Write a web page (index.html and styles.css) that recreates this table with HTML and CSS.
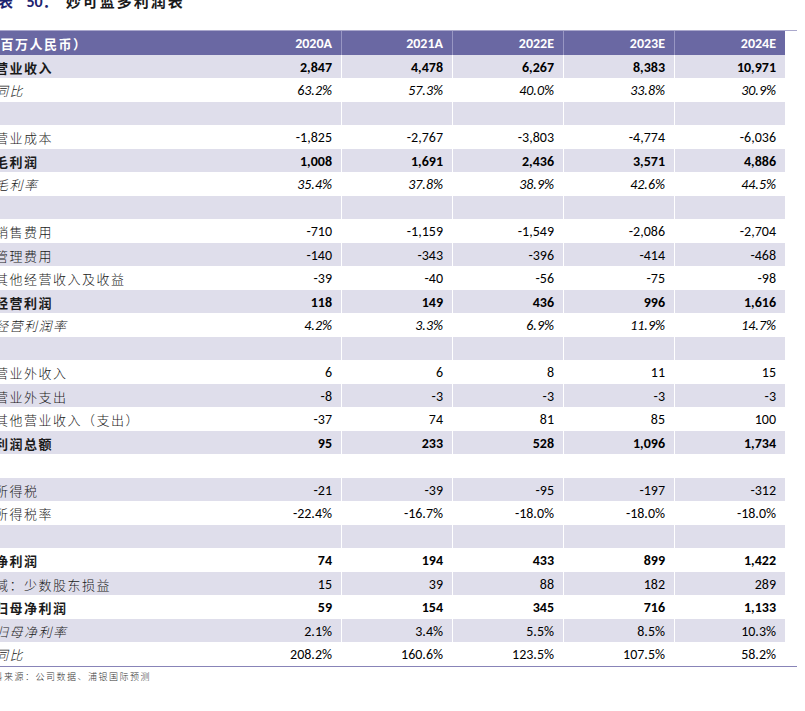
FILE: index.html
```html
<!DOCTYPE html>
<html lang="zh-CN">
<head>
<meta charset="utf-8">
<title>妙可蓝多利润表</title>
<link rel="stylesheet" href="styles.css">
</head>
<body>
<div class="title"><span class="title-no">表 <span class="lat">50</span>：</span>妙可蓝多利润表</div>
<div class="sheet">
  <div class="row head">
    <div class="lbl"><span class="lat">(</span>百万人民币）</div>
    <div class="v">2020A</div><div class="v">2021A</div><div class="v">2022E</div><div class="v">2023E</div><div class="v">2024E</div>
  </div>
  <div class="row shade bold"><div class="lbl">营业收入</div><div class="v">2,847</div><div class="v">4,478</div><div class="v">6,267</div><div class="v">8,383</div><div class="v">10,971</div></div>
  <div class="row ital"><div class="lbl">同比</div><div class="v">63.2%</div><div class="v">57.3%</div><div class="v">40.0%</div><div class="v">33.8%</div><div class="v">30.9%</div></div>
  <div class="row shade"><div class="lbl"></div><div class="v"></div><div class="v"></div><div class="v"></div><div class="v"></div><div class="v"></div></div>
  <div class="row"><div class="lbl">营业成本</div><div class="v">-1,825</div><div class="v">-2,767</div><div class="v">-3,803</div><div class="v">-4,774</div><div class="v">-6,036</div></div>
  <div class="row shade bold"><div class="lbl">毛利润</div><div class="v">1,008</div><div class="v">1,691</div><div class="v">2,436</div><div class="v">3,571</div><div class="v">4,886</div></div>
  <div class="row ital"><div class="lbl">毛利率</div><div class="v">35.4%</div><div class="v">37.8%</div><div class="v">38.9%</div><div class="v">42.6%</div><div class="v">44.5%</div></div>
  <div class="row shade"><div class="lbl"></div><div class="v"></div><div class="v"></div><div class="v"></div><div class="v"></div><div class="v"></div></div>
  <div class="row"><div class="lbl">销售费用</div><div class="v">-710</div><div class="v">-1,159</div><div class="v">-1,549</div><div class="v">-2,086</div><div class="v">-2,704</div></div>
  <div class="row shade"><div class="lbl">管理费用</div><div class="v">-140</div><div class="v">-343</div><div class="v">-396</div><div class="v">-414</div><div class="v">-468</div></div>
  <div class="row"><div class="lbl">其他经营收入及收益</div><div class="v">-39</div><div class="v">-40</div><div class="v">-56</div><div class="v">-75</div><div class="v">-98</div></div>
  <div class="row shade bold"><div class="lbl">经营利润</div><div class="v">118</div><div class="v">149</div><div class="v">436</div><div class="v">996</div><div class="v">1,616</div></div>
  <div class="row ital"><div class="lbl">经营利润率</div><div class="v">4.2%</div><div class="v">3.3%</div><div class="v">6.9%</div><div class="v">11.9%</div><div class="v">14.7%</div></div>
  <div class="row shade"><div class="lbl"></div><div class="v"></div><div class="v"></div><div class="v"></div><div class="v"></div><div class="v"></div></div>
  <div class="row"><div class="lbl">营业外收入</div><div class="v">6</div><div class="v">6</div><div class="v">8</div><div class="v">11</div><div class="v">15</div></div>
  <div class="row shade"><div class="lbl">营业外支出</div><div class="v">-8</div><div class="v">-3</div><div class="v">-3</div><div class="v">-3</div><div class="v">-3</div></div>
  <div class="row"><div class="lbl">其他营业收入（支出）</div><div class="v">-37</div><div class="v">74</div><div class="v">81</div><div class="v">85</div><div class="v">100</div></div>
  <div class="row shade bold"><div class="lbl">利润总额</div><div class="v">95</div><div class="v">233</div><div class="v">528</div><div class="v">1,096</div><div class="v">1,734</div></div>
  <div class="row"><div class="lbl"></div><div class="v"></div><div class="v"></div><div class="v"></div><div class="v"></div><div class="v"></div></div>
  <div class="row shade"><div class="lbl">所得税</div><div class="v">-21</div><div class="v">-39</div><div class="v">-95</div><div class="v">-197</div><div class="v">-312</div></div>
  <div class="row"><div class="lbl">所得税率</div><div class="v">-22.4%</div><div class="v">-16.7%</div><div class="v">-18.0%</div><div class="v">-18.0%</div><div class="v">-18.0%</div></div>
  <div class="row shade"><div class="lbl"></div><div class="v"></div><div class="v"></div><div class="v"></div><div class="v"></div><div class="v"></div></div>
  <div class="row bold"><div class="lbl">净利润</div><div class="v">74</div><div class="v">194</div><div class="v">433</div><div class="v">899</div><div class="v">1,422</div></div>
  <div class="row shade"><div class="lbl">减：少数股东损益</div><div class="v">15</div><div class="v">39</div><div class="v">88</div><div class="v">182</div><div class="v">289</div></div>
  <div class="row bold"><div class="lbl">归母净利润</div><div class="v">59</div><div class="v">154</div><div class="v">345</div><div class="v">716</div><div class="v">1,133</div></div>
  <div class="row shade"><div class="lbl it">归母净利率</div><div class="v">2.1%</div><div class="v">3.4%</div><div class="v">5.5%</div><div class="v">8.5%</div><div class="v">10.3%</div></div>
  <div class="row"><div class="lbl it">同比</div><div class="v">208.2%</div><div class="v">160.6%</div><div class="v">123.5%</div><div class="v">107.5%</div><div class="v">58.2%</div></div>
</div>
<div class="source">资料来源：公司数据、浦银国际预测</div>
</body>
</html>
```
FILE: styles.css
```css
html, body {
  margin: 0;
  padding: 0;
  background: #ffffff;
}
body {
  overflow: hidden;
  color: #111111;
  font-family: "Noto Sans CJK SC", sans-serif;
}
.lat {
  font-family: Carlito, Lato, "Noto Sans CJK SC", sans-serif;
}
.title {
  margin: -7px 0 20px -2px;
  line-height: 16px;
  font-size: 15px;
  font-weight: 700;
  letter-spacing: 2px;
  color: #1b1b1b;
  white-space: nowrap;
}
.title-no {
  color: #1e2470;
  margin-right: 6px;
}
.title-no .lat {
  margin-left: 6px;
  letter-spacing: 0;
  font-size: 16px;
}
.sheet {
  margin-left: -20px;
  width: 817px;
  border-top: 1px solid #aaa8cc;
  border-bottom: 1px solid #8884b8;
}
.row {
  display: grid;
  grid-template-columns: 250px repeat(5, 111px);
  height: 23.5px;
}
.row.shade {
  background: linear-gradient(#dfdeeb, #dfdeeb) no-repeat left top / 805px 100%;
}
.row.head {
  background: linear-gradient(#6a68a3, #6a68a3) no-repeat left top / 805px 100%;
  color: #ffffff;
  font-weight: 700;
}
.lbl {
  display: flex;
  align-items: center;
  padding: 2px 0 0 15px;
  font-size: 13px;
  font-weight: 300;
  letter-spacing: 1.5px;
  white-space: nowrap;
  color: #1a1a1a;
}
.head .lbl {
  color: #ffffff;
}
.v {
  display: flex;
  align-items: center;
  justify-content: flex-end;
  padding: 2px 9px 0 0;
  border-left: 1px solid #ffffff;
  font-family: Carlito, Lato, sans-serif;
  font-size: 14px;
  color: #000000;
}
.lbl + .v {
  border-left-color: transparent;
}
.head .v {
  border-left-color: #9896c3;
  color: #ffffff;
}
.head .lbl + .v {
  border-left-color: transparent;
}
.bold .v, .bold .lbl, .head .lbl, .head .v {
  font-weight: 700;
}
.ital .v, .ital .lbl, .lbl.it {
  font-style: italic;
}
.source {
  margin: 4px 0 0 -17px;
  font-size: 9px;
  font-weight: 300;
  letter-spacing: 1.5px;
  line-height: 12px;
  color: #333333;
  white-space: nowrap;
}
```
